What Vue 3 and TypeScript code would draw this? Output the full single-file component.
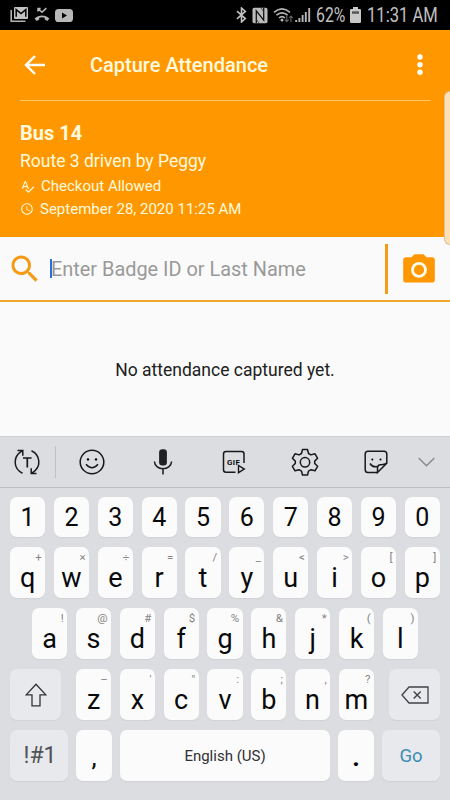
<script setup lang="ts">
interface KeyDef {
  label: string
  hint: string
}

const toKeys = (labels: string, hints: string[]): KeyDef[] =>
  labels.split('').map((label, i) => ({ label, hint: hints[i] ?? '' }))

const digits = '1234567890'.split('')
const topRow = toKeys('qwertyuiop', ['+', '×', '÷', '=', '/', '_', '<', '>', '[', ']'])
const homeRow = toKeys('asdfghjkl', ['!', '@', '#', '$', '%', '&', '*', '(', ')'])
const bottomRow = toKeys('zxcvbnm', ['–', "'", '"', ':', ';', ',', '?'])
</script>

<template>
  <div class="screen">
    <div class="status">
      <div class="notifications">
        <svg width="19" height="18" viewBox="0 0 19 18">
          <path d="M1.2 4v11.2h14.3" fill="none" stroke="#b4b4b4" stroke-width="1.6" />
          <rect x="4" y="1" width="14" height="12" rx="1" fill="#c2c2c2" />
          <path d="M6.2 10.8V3.6l4.8 4 4.8-4v7.2" fill="none" stroke="#000" stroke-width="1.5" />
        </svg>
        <svg width="16" height="16" viewBox="0 0 16 16">
          <path d="M4 1v3.6M3.4 1.5h3.3M4 1.5l4 3.8 4.3-4.2" fill="none" stroke="#b8b8b8" stroke-width="1.5" />
          <path d="M.6 11.6C4.8 7.4 11.2 7.4 15.4 11.6L13.3 14 10.8 12.5V10.8Q8 9.9 5.2 10.8V12.5L2.7 14Z" fill="#b8b8b8" />
        </svg>
        <svg width="18" height="13" viewBox="0 0 18 13">
          <rect width="18" height="13" rx="3.6" fill="#b8b8b8" />
          <path d="M7 3.6v5.8l5-2.9z" fill="#000" />
        </svg>
      </div>
      <div class="indicators">
        <svg class="bt" width="11" height="16" viewBox="0 0 11 16">
          <path d="M1 4.2l8.3 7.4L5.5 15V1l3.8 3.4L1 11.8" fill="none" stroke="#c0c0c0" stroke-width="1.6" />
        </svg>
        <svg class="nfc" width="16" height="17" viewBox="0 0 16 17">
          <rect x=".5" y=".8" width="15" height="15.4" rx="1.8" fill="#bcbcbc" />
          <path d="M4.3 16.2V3.8L11.7 13.2V.8" fill="none" stroke="#111" stroke-width="1.3" />
          <path d="M7 16.2L4.3 12M9 .8L11.7 5" stroke="#333" stroke-width=".7" />
        </svg>
        <svg class="wifi" width="21" height="17" viewBox="0 0 21 17">
          <g fill="none" stroke="#b6b6b6" stroke-width="1.6">
            <path d="M1 5.3Q9 -1.7 17 5.3M3.4 8.2Q9 3.4 14.6 8.2M6 11Q9 8.3 12 11" />
          </g>
          <circle cx="9" cy="13" r="1.5" fill="#b6b6b6" />
          <path d="M13.8 8.5v6M12 12.6l1.8 2 1.8-2M18 15V9M16.2 11l1.8-2 1.8 2" fill="none" stroke="#666" stroke-width="1.1" />
        </svg>
        <svg class="signal" width="16" height="16" viewBox="0 0 16 16">
          <path d="M1.2 15v-2M4.4 15v-4M7.6 15V8M10.8 15V5M14.2 15V1" stroke="#b6b6b6" stroke-width="1.9" />
        </svg>
        <span class="battery-text"><span>62%</span></span>
        <svg class="battery" width="11" height="16" viewBox="0 0 11 16">
          <path d="M3 0h5v2h1.8Q11 2 11 3v11.7Q11 16 9.8 16H1.2Q0 16 0 14.7V3Q0 2 1.2 2H3z" fill="#c8c8c8" />
          <path d="M2 4.3h7v2.5H2z" fill="#555" />
        </svg>
        <span class="clock"><span>11:31 AM</span></span>
      </div>
    </div>

    <header class="header">
      <div class="toolbar">
        <svg class="back" width="22" height="20" viewBox="0 0 22 20">
          <path d="M11 1L2 10l9 9M2 10h19" fill="none" stroke="#fff" stroke-width="2.4" />
        </svg>
        <h1>Capture Attendance</h1>
        <svg width="6" height="22" viewBox="0 0 6 22" fill="#fff">
          <circle cx="3" cy="3" r="2.7" /><circle cx="3" cy="10.7" r="2.7" /><circle cx="3" cy="18.3" r="2.7" />
        </svg>
      </div>
      <section class="trip">
        <h2>Bus 14</h2>
        <p class="route">Route 3 driven by Peggy</p>
        <p class="meta checkout">
          <svg width="15" height="15" viewBox="0 0 24 24" fill="#fff5d0">
            <path d="M12.45 16h2.09L9.43 3H7.57L2.46 16h2.09l1.12-3h5.64l1.14 3zm-6.02-5L8.5 5.48 10.57 11H6.43zm15.16.59l-8.09 8.09L9.83 16l-1.41 1.41 5.09 5.09L23 13l-1.41-1.41z" />
          </svg>
          <span>Checkout Allowed</span>
        </p>
        <p class="meta date">
          <svg width="14" height="14" viewBox="0 0 24 24" fill="#fff5d0">
            <path d="M11.99 2C6.47 2 2 6.48 2 12s4.47 10 9.99 10C17.52 22 22 17.52 22 12S17.52 2 11.99 2zM12 20c-4.42 0-8-3.58-8-8s3.58-8 8-8 8 3.58 8 8-3.58 8-8 8zm.5-13H11v6l5.25 3.15.75-1.23-4.5-2.67z" />
          </svg>
          <span>September 28, 2020 11:25 AM</span>
        </p>
      </section>
      <div class="edge-handle"></div>
    </header>

    <div class="search">
      <svg class="lens" width="36" height="36" viewBox="0 0 24 24" fill="#f49a13">
        <path d="M15.5 14h-.79l-.28-.27C15.41 12.59 16 11.11 16 9.5 16 5.91 13.09 3 9.5 3S3 5.91 3 9.5 5.91 16 9.5 16c1.61 0 3.09-.59 4.23-1.57l.27.28v.79l5 4.99L20.49 19l-4.99-5zm-6 0C7.01 14 5 11.99 5 9.5S7.01 5 9.5 5 14 7.01 14 9.5 11.99 14 9.5 14z" />
      </svg>
      <i class="caret"></i>
      <span class="placeholder">Enter Badge ID or Last Name</span>
      <i class="divider"></i>
      <svg class="camera" width="32" height="29" viewBox="0 0 32 29">
        <path d="M3 3.2H8.5L11.4.3H20.6L23.5 3.2H29Q31.8 3.2 31.8 6V25.8Q31.8 28.6 29 28.6H3Q.2 28.6.2 25.8V6Q.2 3.2 3 3.2Z" fill="#ff9800" />
        <circle cx="16" cy="15.9" r="6.5" fill="none" stroke="#fffdf0" stroke-width="2.8" />
      </svg>
    </div>

    <main class="empty">No attendance captured yet.</main>

    <div class="keyboard">
      <div class="tools">
        <svg class="tool" width="28" height="28" viewBox="0 0 28 28">
          <g fill="none" stroke="#18191b" stroke-width="1.5">
            <path d="M9.5 25.2C.5 21 -.8 9 8.8 3.2M4.5 2.6h5.3v5.2M18.5 2.8C27.5 7 28.8 19 19.2 24.8M23.5 25.4h-5.3v-5.2" />
            <path d="M10 10h8.6M14.3 10v9.5" stroke-width="1.7" />
          </g>
        </svg>
        <i class="tool-sep"></i>
        <svg class="tool smile" width="26" height="26" viewBox="0 0 26 26">
          <circle cx="13" cy="13" r="11.8" fill="none" stroke="#18191b" stroke-width="1.5" />
          <circle cx="9" cy="10.4" r="1.2" /><circle cx="17" cy="10.4" r="1.2" />
          <path d="M7 15.2Q13 22.2 19 15.2" fill="none" stroke="#18191b" stroke-width="1.5" />
        </svg>
        <svg class="tool mic" width="20" height="26" viewBox="0 0 20 26">
          <rect x="6.1" y=".3" width="7.8" height="16.2" rx="3.2" fill="#202124" />
          <path d="M1.4 12.5C2 22 18 22 18.6 12.5M10 19.5V25.5" fill="none" stroke="#18191b" stroke-width="1.5" />
        </svg>
        <svg class="tool gif" width="26" height="24" viewBox="0 0 26 24">
          <path d="M13.5 22.2H4Q1.5 22.2 1.5 19.7V4Q1.5 1.5 4 1.5H19.5Q22 1.5 22 4V13" fill="none" stroke="#18191b" stroke-width="1.5" />
          <path d="M16.5 15.5v7.2l5.8-3.6z" fill="none" stroke="#18191b" stroke-width="1.4" />
          <text x="5" y="14.8" font-size="8" font-weight="600" textLength="13">GIF</text>
        </svg>
        <svg class="tool gear" width="28" height="28" viewBox="0 0 28 28">
          <g fill="none" stroke="#18191b" stroke-width="1.5" stroke-linejoin="round">
            <path d="M11.5 1.5h5l1 4 2.5 1.4 4-1.1 2.6 4.5-2.9 2.8v2.4l2.9 2.8-2.6 4.5-4-1.1-2.5 1.4-1 3.9h-5l-1-3.9L8 21.7l-4 1.1-2.6-4.5 2.9-2.8v-2.4L1.4 10.3 4 5.8l4 1.1 2.5-1.4z" />
            <circle cx="14" cy="14.3" r="4.7" />
          </g>
        </svg>
        <svg class="tool sticker" width="24" height="24" viewBox="0 0 24 24">
          <g fill="none" stroke="#18191b" stroke-width="1.5">
            <path d="M13.5 22.5H4Q1.2 22.5 1.2 19.7V4Q1.2 1.2 4 1.2H20Q22.8 1.2 22.8 4V13.2L13.5 22.5V18Q13.5 14.8 16.5 14.8Q20.5 15 22.8 13.2" />
            <path d="M6 13.5Q8.5 17.7 13.5 16.5" />
          </g>
          <circle cx="8.3" cy="9.5" r="1" /><circle cx="16.5" cy="9.5" r="1" />
        </svg>
        <svg class="tool chevron" width="17" height="10" viewBox="0 0 17 10">
          <path d="M.7 1l7.8 7.8L16.3 1" fill="none" stroke="#85878b" stroke-width="1.3" />
        </svg>
      </div>

      <div class="keys">
        <div class="row row-digits">
          <div v-for="d in digits" :key="d" class="key digit">{{ d }}</div>
        </div>
        <div class="row">
          <div v-for="k in topRow" :key="k.label" class="key letter">
            <span class="hint">{{ k.hint }}</span>{{ k.label }}
          </div>
        </div>
        <div class="row row-home">
          <div v-for="k in homeRow" :key="k.label" class="key letter">
            <span class="hint">{{ k.hint }}</span>{{ k.label }}
          </div>
        </div>
        <div class="row row-shift">
          <div class="key special shift">
            <svg width="22" height="24" viewBox="0 0 22 24">
              <path d="M11 1.2L1.2 11.8H7V22.8H15V11.8H20.8Z" fill="none" stroke="#303236" stroke-width="1.3" />
            </svg>
          </div>
          <div class="letters">
            <div v-for="k in bottomRow" :key="k.label" class="key letter">
              <span class="hint">{{ k.hint }}</span>{{ k.label }}
            </div>
          </div>
          <div class="key special shift">
            <svg width="28" height="18" viewBox="0 0 28 18">
              <path d="M1 9L8 1H27V17H8Z" fill="none" stroke="#404247" stroke-width="1.3" />
              <path d="M12.7 5.5l7 7M19.7 5.5l-7 7" stroke="#404247" stroke-width="1.4" />
            </svg>
          </div>
        </div>
        <div class="row row-space">
          <div class="key special symbols">!#1</div>
          <div class="key punct">,</div>
          <div class="key space">English (US)</div>
          <div class="key punct dot">.</div>
          <div class="key special go">Go</div>
        </div>
      </div>
    </div>
  </div>
</template>

<style>
body {
  margin: 0;
  background: #fafafa;
}
</style>

<style scoped>
.screen {
  width: 450px;
  height: 800px;
  display: flex;
  flex-direction: column;
  overflow: hidden;
  background: #fafafa;
  font-family: Roboto, sans-serif;
}
.screen * {
  box-sizing: border-box;
}
svg {
  display: block;
  flex: none;
}
h1,
h2,
p {
  margin: 0;
}
.status {
  height: 30px;
  flex: none;
  display: flex;
  justify-content: space-between;
  padding: 0 13px 0 10px;
  background: #000;
  color: #c0c0c0;
}
.notifications {
  display: flex;
  align-items: center;
  gap: 5px;
}
.indicators {
  display: flex;
  align-items: center;
}
.nfc {
  margin-left: 5px;
}
.wifi {
  margin-left: 5px;
}
.signal {
  margin-left: 1px;
}
.battery-text,
.clock {
  white-space: nowrap;
  font-size: 19.5px;
  line-height: 31px;
}
.battery-text {
  width: 29px;
  margin-left: 5px;
}
.clock {
  width: 70px;
  margin-left: 6px;
}
.battery-text span,
.clock span {
  display: inline-block;
  transform: scaleX(0.81);
  transform-origin: left;
}
.clock span {
  transform: scaleX(0.85);
}
.battery {
  margin-left: 5px;
}
.header {
  position: relative;
  height: 207px;
  flex: none;
  padding: 0 20px;
  background: #ff9800;
  color: #fffadf;
}
.toolbar {
  height: 71px;
  display: flex;
  align-items: center;
  padding: 0 7px 0 4px;
  border-bottom: 1px solid #ffc766;
}
h1 {
  flex: 1;
  margin-left: 44px;
  font-size: 20px;
  font-weight: 500;
  line-height: 24px;
}
.trip {
  padding-top: 19px;
}
h2 {
  font-size: 20px;
  font-weight: 700;
  line-height: 26px;
}
.route {
  margin-top: 3px;
  font-size: 17.5px;
  line-height: 24px;
}
.meta {
  display: flex;
  align-items: center;
  height: 22.5px;
  font-size: 15px;
}
.checkout {
  margin-top: 2px;
  gap: 6px;
}
.date {
  gap: 6px;
}
.edge-handle {
  position: absolute;
  right: 0;
  top: 61px;
  width: 6px;
  height: 154px;
  border: 1px solid #d4c3a8;
  border-right: 0;
  border-radius: 6px 0 0 6px;
  background: #ffe0b5;
}
.search {
  height: 65px;
  flex: none;
  display: flex;
  align-items: center;
  padding: 0 15px 0 7px;
  border-bottom: 2px solid #f0a62f;
}
.caret {
  width: 2px;
  height: 19px;
  margin-left: 7px;
  background: #2a6fe0;
}
.placeholder {
  flex: 1;
  margin-left: -1px;
  padding-top: 2px;
  font-size: 19.9px;
  line-height: 24px;
  color: #999;
}
.divider {
  width: 3px;
  height: 50px;
  margin-right: 15px;
  background: #f29c18;
}
.empty {
  height: 134px;
  flex: none;
  display: flex;
  align-items: center;
  justify-content: center;
  padding-top: 2px;
  font-size: 17.5px;
  color: #202020;
}
.keyboard {
  flex: 1;
  background: #dcdde1;
}
.tools {
  height: 52px;
  display: flex;
  align-items: center;
  padding: 0 15px 0 13px;
  border-top: 1px solid #d0d1d5;
  border-bottom: 1px solid #bbbcc0;
}
.tool-sep {
  width: 1px;
  height: 32px;
  margin-left: 14px;
  background: #c1c2c6;
}
.smile {
  margin-left: 23px;
}
.mic {
  margin-left: 48px;
}
.gif {
  margin-left: 49px;
}
.gear {
  margin-left: 43px;
}
.sticker {
  margin-left: 45px;
}
.chevron {
  margin-left: 30px;
}
.keys {
  display: flex;
  flex-direction: column;
  gap: 10px;
  padding: 9px 10px 0;
}
.row {
  display: flex;
  justify-content: space-between;
  height: 51px;
}
.row-digits {
  height: 40px;
}
.row-home {
  padding: 0 22px;
}
.key {
  position: relative;
  width: 35.2px;
  display: flex;
  align-items: center;
  justify-content: center;
  border-radius: 7px;
  background: #fbfbfb;
  box-shadow: 0 1px 1px #d0d1d4;
  color: #08090a;
}
.digit {
  font-size: 25px;
}
.letter {
  padding-top: 11px;
  font-size: 27px;
  line-height: 26px;
}
.hint {
  position: absolute;
  right: 3.5px;
  top: 4px;
  font-size: 11.5px;
  line-height: 12px;
  color: #858585;
}
.letters {
  width: 298px;
  display: flex;
  justify-content: space-between;
}
.special {
  background: #e8e9ed;
}
.shift {
  width: 51px;
}
.symbols {
  width: 58px;
  padding-left: 2px;
  font-size: 23px;
  color: #505256;
}
.punct {
  padding-top: 2px;
  font-size: 26px;
}
.dot {
  font-weight: 700;
}
.space {
  width: 210px;
  font-size: 15px;
  color: #303134;
}
.go {
  width: 58px;
  font-size: 18.5px;
  color: #3c8db5;
}
</style>
